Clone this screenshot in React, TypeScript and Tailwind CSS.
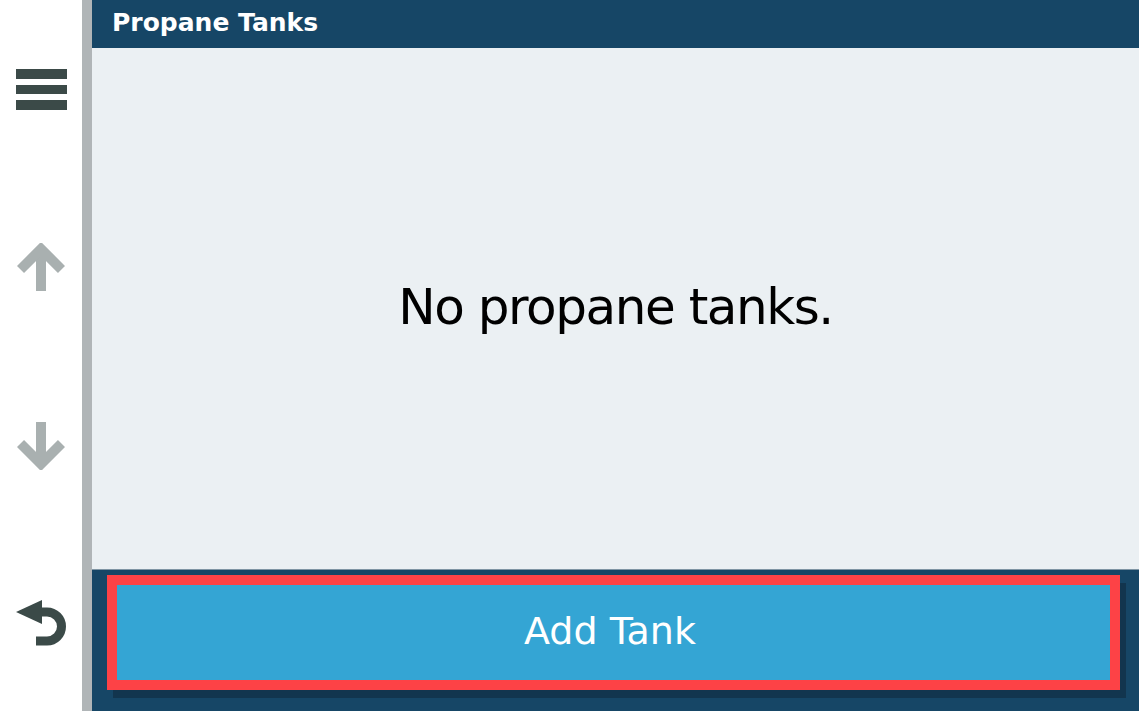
const FONT = { fontFamily: '"DejaVu Sans", "Liberation Sans", sans-serif' }

function MenuIcon() {
  return (
    <svg width="51" height="41" viewBox="0 0 51 41" className="block">
      <rect x="0" y="0" width="51" height="10" fill="#3b4a48" />
      <rect x="0" y="16" width="51" height="9" fill="#3b4a48" />
      <rect x="0" y="31" width="51" height="10" fill="#3b4a48" />
    </svg>
  )
}

function ArrowIcon({ down }: { down?: boolean }) {
  return (
    <svg
      width="48"
      height="48"
      viewBox="0 0 48 48"
      className={`block ${down ? 'rotate-180' : ''}`}
    >
      <path d="M24 48 V6" stroke="#a9b0b0" strokeWidth="10" fill="none" />
      <path d="M3.5 26.5 L24 6 L44.5 26.5" stroke="#a9b0b0" strokeWidth="10" fill="none" strokeLinejoin="miter" />
    </svg>
  )
}

function BackIcon() {
  return (
    <svg width="51" height="46" viewBox="0 0 51 46" className="block">
      <polygon points="0,12 26,0 26,24" fill="#3b4a48" />
      <path d="M24 12 H31 A14.5 14.5 0 0 1 31 41 H20" stroke="#3b4a48" strokeWidth="9" fill="none" />
    </svg>
  )
}

export default function App() {
  return (
    <div className="flex w-[1139px] h-[711px] overflow-hidden bg-white" style={FONT}>
      <div className="w-[82px] shrink-0 flex flex-col pl-[16px] bg-white">
        <div className="mt-[69px]"><MenuIcon /></div>
        <div className="mt-[133px] pl-[1px]"><ArrowIcon /></div>
        <div className="mt-[131px] pl-[1px]"><ArrowIcon down /></div>
        <div className="mt-[130px]"><BackIcon /></div>
      </div>
      <div className="w-[10px] shrink-0 bg-[#b0b5b7]" />

      <div className="flex-1 flex flex-col">
        <div className="h-[48px] shrink-0 bg-[#164666] flex items-center pl-[20px]">
          <span className="text-white font-bold text-[25px] leading-none -mt-[3px]">Propane Tanks</span>
        </div>

        <div className="flex-1 bg-[#ebf0f3] flex items-center justify-center">
          <span className="text-black text-[50px] tracking-[-1.45px] leading-none -mt-[4px]">No propane tanks.</span>
        </div>

        <div className="h-[142px] shrink-0 bg-[#164666] border-t border-[#7f95a4] pt-[5px] pl-[15px] pr-[19px]">
          <button className="w-full h-[115px] border-[10px] border-[#fd4246] bg-[#34a5d4] shadow-[6px_8px_0_0_#12354e] flex items-center justify-center">
            <span className="text-white text-[38px] leading-none -mt-[4px] -ml-[7px]">Add Tank</span>
          </button>
        </div>
      </div>
    </div>
  )
}
